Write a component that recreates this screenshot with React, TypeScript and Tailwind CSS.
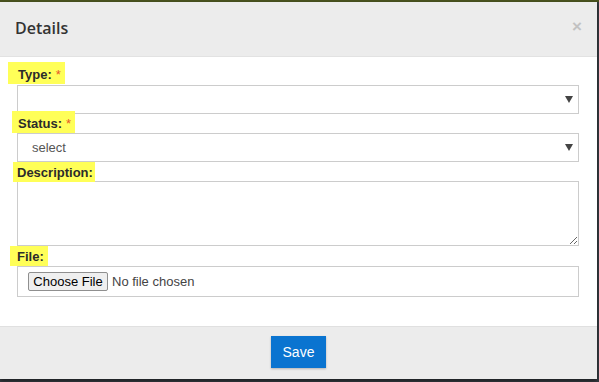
import React from 'react';

const Label: React.FC<{ text: string; required?: boolean; className: string }> = ({ text, required, className }) => (
  <div className={`relative z-10 self-start bg-[#ffff58] font-bold text-[13px] text-[#2b2b2b] leading-none flex items-center ${className}`}>
    {text}
    {required && <span className="ml-1 font-normal text-[#e5582a]">*</span>}
  </div>
);

const Caret: React.FC = () => (
  <svg width="8" height="7" viewBox="0 0 8 7" className="fill-[#444]">
    <path d="M0 0h8L4 7z" />
  </svg>
);

const App: React.FC = () => {
  return (
    <div className="w-[599px] h-[382px] overflow-hidden bg-[#363b41] font-['Liberation_Sans',Arial,sans-serif]">
      <div className="h-[2px] bg-[#4a531f]" />
      <div className="w-[597px] h-[377px] bg-white shadow-[0_2px_4px_rgba(0,0,0,0.5)] flex flex-col">
        {/* header */}
        <div className="h-[55px] bg-[#ececec] border-b border-[#e2e2e2] pl-[15px] pr-[16px] flex items-center justify-between">
          <h2 className="font-['Open_Sans',sans-serif] font-semibold text-[16px] text-[#333] mt-[-2px]">Details</h2>
          <span className="text-[#c2c2c2] font-bold text-[17px] leading-none mt-[-6px] mr-[-1px]">×</span>
        </div>

        {/* body */}
        <div className="flex-1 flex flex-col pl-[17px] pr-[18px]">
          <Label text="Type:" required className="mt-[5px] h-[22px] ml-[-9px] pl-[10px] pr-[4px] pt-[2px]" />
          <div className="mt-[1px] h-[29px] border border-[#cccccc] flex items-center justify-end pr-[5px]">
            <Caret />
          </div>

          <Label text="Status:" required className="mt-[-3px] h-[22px] ml-[-5px] pl-[6px] pr-[4px] pt-[2px]" />
          <div className="h-[29px] border border-[#cccccc] flex items-center justify-between pl-[14px] pr-[5px]">
            <span className="text-[13px] text-[#555]">select</span>
            <Caret />
          </div>

          <Label text="Description:" className="h-[20px] ml-[-4px] pl-[4px] pr-[2px]" />
          <textarea className="mt-[-1px] h-[65px] border border-[#cccccc] outline-none resize-y block" />

          <Label text="File:" className="h-[20px] ml-[-7px] pl-[7px] pr-[4px]" />
          <div className="h-[31px] border border-[#cccccc] flex items-center pl-[10px] gap-[4px]">
            <button className="h-[19px] w-[80px] bg-[#efefef] border border-[#8f8f8f] rounded-[2px] text-[13px] text-black leading-none">
              Choose File
            </button>
            <span className="text-[13px] text-[#444]">No file chosen</span>
          </div>
        </div>

        {/* footer */}
        <div className="h-[53px] bg-[#ececec] border-t border-[#e0e0e0] flex justify-center pt-[9px]">
          <button className="h-[32px] w-[55px] bg-[#0a74d0] text-white text-[14px] shadow-[0_1px_2px_rgba(0,0,0,0.25)]">
            Save
          </button>
        </div>
      </div>
    </div>
  );
};

export default App;
